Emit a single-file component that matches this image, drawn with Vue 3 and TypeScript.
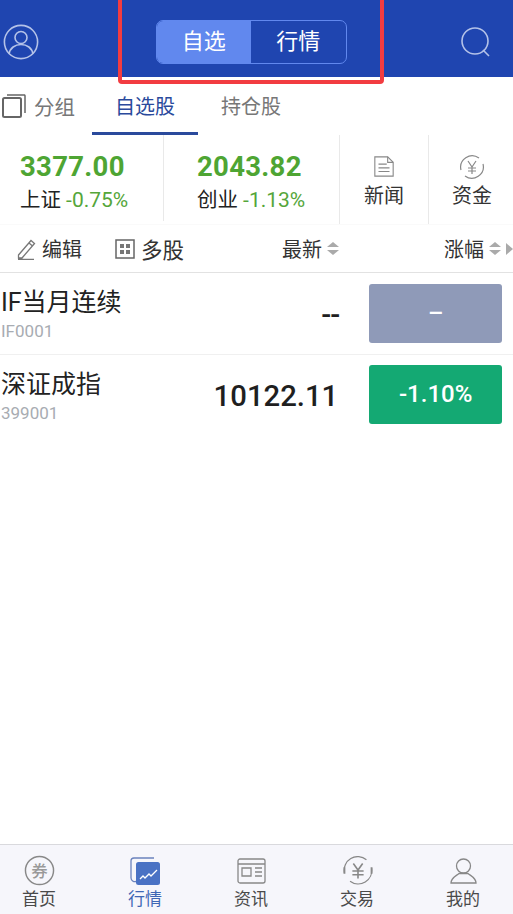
<script setup lang="ts">
const indices = [
  { value: '3377.00', name: '上证', change: '-0.75%' },
  { value: '2043.82', name: '创业', change: '-1.13%' }
];

const stocks = [
  { name: 'IF当月连续', code: 'IF0001', price: '--', change: '–', flat: true },
  { name: '深证成指', code: '399001', price: '10122.11', change: '-1.10%', flat: false }
];

const tabs = ['首页', '行情', '资讯', '交易', '我的'];
</script>

<template>
  <div class="page">
    <header class="header">
      <svg class="user-icon" width="36" height="36" viewBox="0 0 36 36" fill="none" stroke="#b4c2e8" stroke-width="1.6">
        <circle cx="18" cy="18" r="16.6" />
        <circle cx="18" cy="13.5" r="6" />
        <path d="M6 30c1-6 6-9.500 12-9.500s11 3.500 12 9.500" />
      </svg>
      <div class="switch">
        <span class="switch-item on">自选</span>
        <span class="switch-item">行情</span>
      </div>
      <svg class="search-icon" width="32" height="32" viewBox="0 0 32 32" fill="none" stroke="#b4c2e8" stroke-width="1.6">
        <circle cx="15" cy="15" r="13" />
        <path d="M23 24l6 6" />
      </svg>
    </header>
    <div class="annotation"></div>

    <nav class="tabs">
      <div class="group">
        <svg width="24" height="24" viewBox="0 0 24 24" fill="none" stroke="#666" stroke-width="1.5">
          <rect x="1" y="4" width="18" height="19" rx="1.500" stroke-width="2" />
          <path d="M5 1h17.500a1 1 0 0 1 .5 1v17" />
        </svg>
        <span>分组</span>
      </div>
      <span class="tab active">自选股</span>
      <span class="tab">持仓股</span>
    </nav>

    <section class="strip">
      <div v-for="item in indices" :key="item.name" class="index">
        <div class="index-value">{{ item.value }}</div>
        <div class="index-line">{{ item.name }} <span class="index-change">{{ item.change }}</span></div>
      </div>
      <div class="shortcut news">
        <svg width="22" height="22" viewBox="0 0 24 24" fill="none" stroke="#888" stroke-width="1.200">
          <path d="M2 2h14l6 6v15H2z" />
          <path d="M16 2v6h6M6 10h9M6 14h12M6 18h12" />
        </svg>
        <span>新闻</span>
      </div>
      <div class="shortcut funds">
        <svg width="26" height="26" viewBox="0 0 26 26" fill="none" stroke="#888" stroke-width="1.200">
          <path d="M2 16A11.500 11.500 0 0 1 20 4M24 10a11.500 11.500 0 0 1-18 12" />
          <path d="M9 7l4 6 4-6M13 13v7M9 14h8M9 17h8" />
        </svg>
        <span>资金</span>
      </div>
    </section>

    <section class="toolbar">
      <div class="tool edit">
        <svg width="20" height="22" viewBox="0 0 20 22" fill="none" stroke="#777" stroke-width="1.300">
          <path d="M1.500 17L14 2.500l3.500 3L5 20H1.500zM12 5l3.500 3M1 21.500h16" />
        </svg>
        <span>编辑</span>
      </div>
      <div class="tool multi">
        <svg width="20" height="20" viewBox="0 0 20 20">
          <rect x="1" y="1" width="18" height="18" fill="none" stroke="#666" stroke-width="1.500" />
          <path d="M5 5h4v4H5zM11 5h4v4h-4zM5 11h4v4H5zM11 11h4v4h-4z" fill="#777" />
        </svg>
        <span>多股</span>
      </div>
      <div class="col latest">最新<i class="sort"></i></div>
      <div class="col rise">涨幅<i class="sort"></i><i class="more"></i></div>
    </section>

    <section class="list">
      <div v-for="stock in stocks" :key="stock.code" class="row">
        <div class="names">
          <div class="name">{{ stock.name }}</div>
          <div class="code">{{ stock.code }}</div>
        </div>
        <div :class="['price', { dash: stock.flat }]">{{ stock.price }}</div>
        <div :class="['badge', { flat: stock.flat }]">{{ stock.change }}</div>
      </div>
    </section>

    <footer class="tabbar">
      <div v-for="(tab, i) in tabs" :key="tab" :class="['bar-item', { current: i === 1 }]">
        <div class="bar-icon">
          <svg v-if="i === 0" width="31" height="31" viewBox="0 0 32 32" fill="none" stroke="#888" stroke-width="1.500">
            <circle cx="16" cy="16" r="14.500" />
            <text x="16" y="22.500" text-anchor="middle" class="coupon">券</text>
          </svg>
          <svg v-else-if="i === 1" width="30" height="28" viewBox="0 0 30 28">
            <path d="M24 1H4a3 3 0 0 0-3 3v17a4 4 0 0 0 5 3.500" fill="none" stroke="#6b83bd" stroke-width="1.300" />
            <rect x="6" y="5" width="24" height="23" rx="2.500" fill="#4a72c4" />
            <path d="M10 22l3-3 2 2 4-4 2 2 6-6" fill="none" stroke="#fff" stroke-width="1.300" />
          </svg>
          <svg v-else-if="i === 2" width="29" height="26" viewBox="0 0 29 26" fill="none" stroke="#888" stroke-width="1.300">
            <rect x="1" y="1" width="27" height="24" rx="2" />
            <path d="M1 6h27M5 10h9v8H5zM18 10h7M18 14h7M18 18h7" />
          </svg>
          <svg v-else-if="i === 3" class="trade-icon" width="30" height="29" viewBox="0 0 32 31" fill="none" stroke="#888" stroke-width="1.300">
            <path d="M1.500 18A14.500 14.500 0 0 1 25 4M30.500 13a14.500 14.500 0 0 1-23 14" />
            <path d="M1.500 12v7M30.500 12v7" stroke-width="2" />
            <path d="M11 8l5 7 5-7M16 15v9M10 16h12M10 20h12" stroke-width="1.700" />
          </svg>
          <svg v-else width="27" height="26" viewBox="0 0 27 26" fill="none" stroke="#888" stroke-width="1.300">
            <circle cx="13.500" cy="8" r="7" />
            <path d="M1 25c0-5 5-7 8-9.500h9c3 2.500 8 4.500 8 9.500z" />
          </svg>
        </div>
        <span>{{ tab }}</span>
      </div>
    </footer>
  </div>
</template>

<style scoped>
.page {
  position: relative;
  width: 513px;
  height: 914px;
  display: flex;
  flex-direction: column;
  overflow: hidden;
  background: #fff;
  font-family: Roboto, "Noto Sans CJK SC", sans-serif;
  color: #222;
}

.header {
  height: 77px;
  flex: none;
  display: flex;
  align-items: center;
  justify-content: space-between;
  padding: 0 21px 0 3px;
  background: #1f45b0;
}

.user-icon {
  margin-top: 7px;
}

.search-icon {
  margin-top: 6px;
}

.switch {
  width: 191px;
  height: 44px;
  display: flex;
  margin: 7px 0 0 3px;
  border: 1px solid #6188ee;
  border-radius: 7px;
  overflow: hidden;
  box-sizing: border-box;
}

.switch-item {
  flex: 1;
  text-align: center;
  line-height: 42px;
  font-size: 22px;
  color: #fff;
}

.switch-item.on {
  background: #6188ee;
}

.annotation {
  position: absolute;
  left: 118px;
  top: -4px;
  width: 266px;
  height: 88px;
  box-sizing: border-box;
  border: 4px solid #f23c41;
  border-radius: 4px;
}

.tabs {
  height: 58px;
  flex: none;
  display: flex;
  align-items: center;
  font-size: 20px;
  color: #777;
}

.group {
  width: 92px;
  display: flex;
  align-items: center;
  gap: 8px;
  padding-left: 2px;
  box-sizing: border-box;
  font-size: 20.500px;
}

.tab {
  width: 106px;
  height: 58px;
  line-height: 60px;
  text-align: center;
  box-sizing: border-box;
}

.tab.active {
  color: #2a4a9c;
  border-bottom: 3px solid #2a4a9c;
}

.strip {
  height: 90px;
  flex: none;
  display: flex;
  border-bottom: 1px solid #fafafa;
  box-sizing: border-box;
}

.index {
  flex: none;
  width: 164px;
  padding: 16px 0 0 20px;
  box-sizing: border-box;
  border-right: 1px solid #e9e9e9;
  margin-bottom: 3px;
}

.index + .index {
  width: 176px;
  padding-left: 33px;
  margin-bottom: 0;
}

.index-value {
  font-size: 27.500px;
  font-weight: 700;
  line-height: 32px;
  color: #4ea533;
  letter-spacing: 0.3px;
}

.index-line {
  margin-top: 3px;
  font-size: 20.500px;
  line-height: 28px;
  white-space: nowrap;
}

.index-change {
  font-size: 21px;
  color: #55a63a;
}

.shortcut {
  flex: none;
  width: 89px;
  display: flex;
  flex-direction: column;
  align-items: center;
  justify-content: center;
  gap: 3px;
  padding-top: 4px;
  box-sizing: border-box;
  font-size: 20px;
  color: #333;
}

.shortcut.news {
  border-right: 1px solid #e9e9e9;
}

.shortcut.funds {
  width: 86px;
  gap: 0;
}

.toolbar {
  height: 48px;
  flex: none;
  display: flex;
  align-items: center;
  font-size: 20px;
  color: #333;
  border-bottom: 1px solid #e2e2e2;
  box-sizing: border-box;
}

.tool {
  display: flex;
  align-items: center;
  gap: 6px;
}

.edit {
  margin-left: 17px;
  gap: 5px;
}

.multi {
  margin-left: 33px;
  font-size: 21.500px;
}

.col {
  display: flex;
  align-items: center;
  white-space: nowrap;
}

.latest {
  margin-left: auto;
  margin-right: 104px;
}

.rise {
  width: 69px;
}

.sort {
  flex: none;
  position: relative;
  width: 13px;
  height: 13px;
  margin-left: 5px;
}

.sort::before,
.sort::after {
  content: "";
  position: absolute;
  left: 0;
  border-left: 6.500px solid transparent;
  border-right: 6.500px solid transparent;
}

.sort::before {
  top: 0;
  border-bottom: 5.500px solid #aaa;
}

.sort::after {
  bottom: 0;
  border-top: 5.500px solid #aaa;
}

.more {
  flex: none;
  width: 0;
  height: 0;
  margin-left: 4px;
  border-left: 7px solid #aaa;
  border-top: 6px solid transparent;
  border-bottom: 6px solid transparent;
}

.list {
  flex: 1;
}

.row {
  height: 82px;
  display: flex;
  align-items: center;
  border-bottom: 1px solid #f0f0f0;
  box-sizing: border-box;
}

.row:last-child {
  border-bottom: none;
}

.names {
  width: 190px;
  margin-top: -1px;
  padding-left: 1px;
}

.name {
  font-size: 25px;
  line-height: 34px;
  color: #222;
  white-space: nowrap;
}

.code {
  margin-top: 1px;
  font-size: 17px;
  line-height: 20px;
  color: #a8acb2;
}

.price {
  width: 148px;
  margin-left: auto;
  text-align: right;
  font-size: 29.300px;
  font-weight: 500;
  color: #1f1f1f;
}

.price.dash {
  margin-top: 3px;
  transform: translateX(1px);
  letter-spacing: -1px;
}

.badge {
  width: 133px;
  height: 59px;
  margin-left: 31px;
  margin-right: 11px;
  border-radius: 3px;
  background: #14a973;
  color: #fff;
  text-align: center;
  line-height: 59px;
  font-size: 24px;
  font-weight: 500;
}

.row + .row .badge {
  margin-top: -3px;
}

.badge.flat {
  background: #8f9ab8;
}

.tabbar {
  height: 70px;
  flex: none;
  display: flex;
  background: #f6f6fb;
  border-top: 1px solid #d9d9dd;
  box-sizing: border-box;
  padding-top: 8px;
}

.bar-item {
  flex: none;
  width: 106px;
  display: flex;
  flex-direction: column;
  align-items: center;
  font-size: 17px;
  line-height: 22px;
  color: #4a4a4a;
}

.bar-item:first-child {
  margin-left: -14px;
}

.bar-icon {
  height: 35px;
  display: flex;
  align-items: center;
}

.trade-icon {
  margin-left: 2px;
}

.bar-item.current {
  color: #3f67b5;
}

.coupon {
  font-size: 17px;
  font-weight: 500;
  fill: #999;
  stroke: none;
}
</style>

<style>
html,
body {
  margin: 0;
  background: #fff;
}
</style>
